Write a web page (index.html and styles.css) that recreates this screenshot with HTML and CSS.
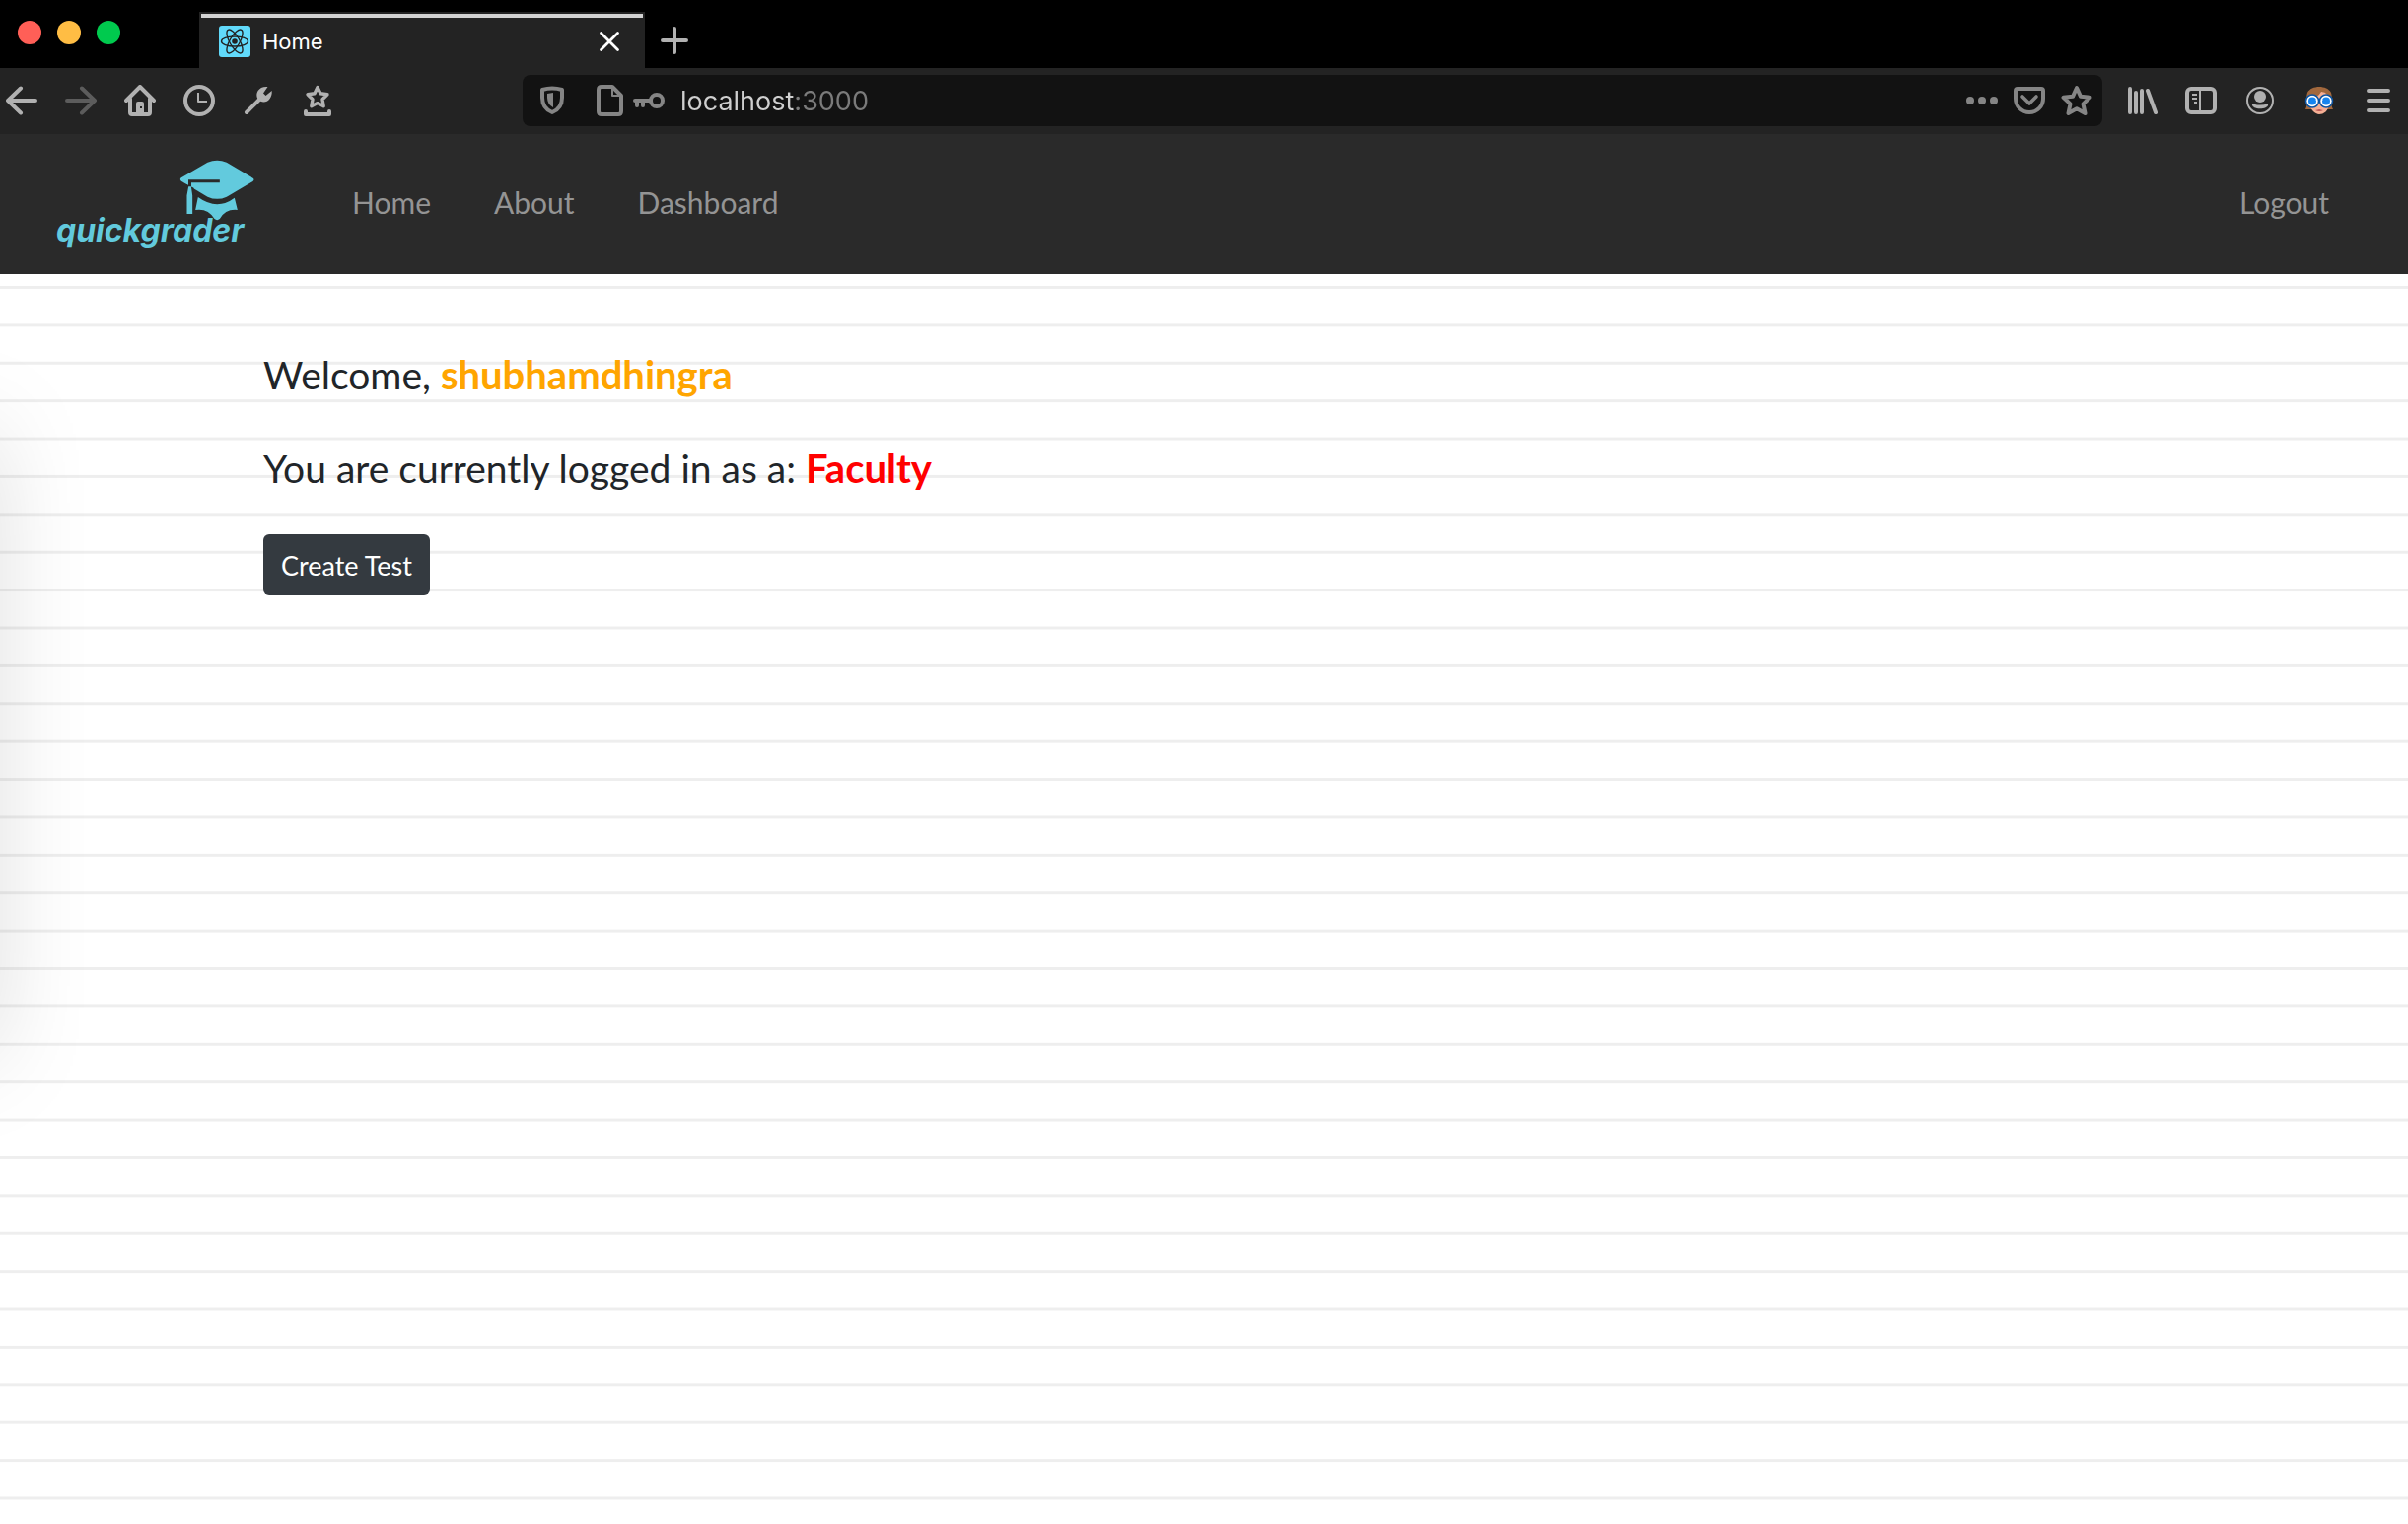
FILE: index.html
```html
<!DOCTYPE html>
<html lang="en">
<head>
<meta charset="utf-8">
<meta name="viewport" content="width=device-width, initial-scale=1">
<title>Home</title>
<link rel="stylesheet" href="styles.css">
</head>
<body>
<div class="tabs">
  <div class="lights">
    <button class="light red" aria-label="Close window"></button>
    <button class="light yellow" aria-label="Minimize window"></button>
    <button class="light green" aria-label="Zoom window"></button>
  </div>
  <div class="tab">
    <svg class="icon" viewBox="0 0 32 32"><rect width="32" height="32" rx="3" fill="#61dafb"/><g fill="none" stroke="#222" stroke-width="1.4"><ellipse cx="16" cy="16" rx="13.5" ry="5"/><ellipse cx="16" cy="16" rx="13.5" ry="5" transform="rotate(60 16 16)"/><ellipse cx="16" cy="16" rx="13.5" ry="5" transform="rotate(120 16 16)"/></g><circle cx="16" cy="16" r="2.8" fill="#222"/></svg>
    <span class="tab-title">Home</span>
    <button class="icon-button" aria-label="Close tab"><svg class="icon" viewBox="0 0 32 32"><path d="M7.500 7.500l17 17m0-17l-17 17" stroke="#fff" stroke-width="2.800" stroke-linecap="round"/></svg></button>
  </div>
  <button class="icon-button new-tab" aria-label="New tab"><svg class="icon" viewBox="0 0 32 32"><path d="M16 4v24M4 16h24" stroke="#b1b1b1" stroke-width="4" stroke-linecap="round"/></svg></button>
</div>

<div class="toolbar">
  <div class="tools">
    <button class="icon-button" aria-label="Back"><svg class="icon line" viewBox="0 0 32 32"><path d="M30 16H2M15 3.500L2 16l13 12.500"/></svg></button>
    <button class="icon-button faded" aria-label="Forward"><svg class="icon line" viewBox="0 0 32 32"><path d="M2 16h28M17 3.500L30 16 17 28.500"/></svg></button>
    <button class="icon-button" aria-label="Home page"><svg class="icon line" viewBox="0 0 32 32"><path d="M2 16L16 2l14 14M6 14v14q0 2 2 2h16q2 0 2-2V14"/><path d="M12 29V19q0-2 2-2h4q2 0 2 2v10z" fill="#b1b1b1" stroke="none"/><path d="M16 22h2v2h-2z" fill="#232323" stroke="none"/></svg></button>
    <button class="icon-button" aria-label="History"><svg class="icon line" viewBox="0 0 32 32"><circle cx="16" cy="16" r="14"/><path d="M15 8v9h9" stroke-width="2" stroke-linecap="butt"/></svg></button>
    <button class="icon-button" aria-label="Developer tools"><svg class="icon line" viewBox="0 0 32 32"><path d="M4 28L18 14"/><path d="M25.500 2C17 1 12 8 15.500 14.500c6 7 15 1 14.200-8.500L23.500 11 21 8.500z" fill="#b1b1b1" stroke="none"/></svg></button>
    <button class="icon-button" aria-label="Bookmarks menu"><svg class="icon line" viewBox="0 0 32 32"><path d="M16 2.500l3 6.300 7 1-5 5 1.200 7L16 18.600 9.800 21.800l1.200-7-5-5 7-1z" stroke-width="3.400"/><path d="M4 27v3h24v-3"/></svg></button>
  </div>
  <div class="address">
    <svg class="icon line shield" viewBox="0 0 32 32"><path d="M6 5q10-3 20 0v8q0 11-10 15Q6 24 6 13z" stroke-width="4"/><path d="M11 9l6-1v15q-6-3-6-10z" fill="currentColor" stroke="none"/></svg>
    <svg class="icon line page" viewBox="0 0 32 32"><path d="M8 2h11l9 9v16q0 3-3 3H8q-3 0-3-3V5q0-3 3-3z"/><path d="M19 2v9h9" stroke-width="2"/></svg>
    <svg class="icon line" viewBox="0 0 32 32"><circle cx="24" cy="16" r="6"/><path d="M2 16h16M4 16v5M10 16v5"/></svg>
    <input class="url" type="text" aria-label="Address" value="localhost:3000">
    <button class="icon-button" aria-label="Page actions"><svg class="icon" viewBox="0 0 32 32" fill="currentColor"><circle cx="4" cy="16" r="4"/><circle cx="16" cy="16" r="4"/><circle cx="28" cy="16" r="4"/></svg></button>
    <button class="icon-button" aria-label="Save to Pocket"><svg class="icon line" viewBox="0 0 32 32"><path d="M4 4h24q2 0 2 2v8a14 14 0 0 1-28 0V6q0-2 2-2z"/><path d="M9 12l7 7 7-7" stroke-width="3.600"/></svg></button>
    <button class="icon-button" aria-label="Bookmark this page"><svg class="icon line" viewBox="0 0 32 32"><path d="M16 3l4 8.800 9.500 1-7 6.600 2 9.600-8.500-4.800L7.500 29l2-9.600-7-6.600 9.500-1z"/></svg></button>
  </div>
  <div class="tools">
    <button class="icon-button" aria-label="Library"><svg class="icon line" viewBox="0 0 32 32"><path d="M4 4v24M10 8v20M16 6v22M22 6l8 22"/></svg></button>
    <button class="icon-button" aria-label="Sidebars"><svg class="icon line" viewBox="0 0 32 32"><rect x="2" y="4" width="28" height="24" rx="4"/><path d="M15 4v24M7 10h5M7 14h5M9 18h3" stroke-width="2" stroke-linecap="butt"/></svg></button>
    <button class="icon-button" aria-label="Account"><svg class="icon line" viewBox="0 0 32 32"><circle cx="16" cy="16" r="13" stroke-width="2"/><circle cx="16" cy="12" r="6" fill="#b1b1b1" stroke="none"/><path d="M8 19q8 3 16 0c2 7-18 7-16 0z" fill="#b1b1b1" stroke="none"/></svg></button>
    <button class="icon-button" aria-label="Profile"><svg class="icon" viewBox="0 0 32 32"><path d="M2 25C5 20 2 14 4 8c4-8 20-8 24 0 2 6-1 12 2 17z" fill="#a2683d"/><path d="M7 13Q15 13 18 7q8 0 8 11c0 9-6 12-10 12S6 25 6 17z" fill="#f5af94"/><path d="M12 26q4 2 8 0l-4-1z" fill="#b55"/><g fill="#1684ef" stroke="#fff" stroke-width="2"><circle cx="9" cy="16.500" r="5"/><circle cx="23" cy="16.500" r="5"/></g><path d="M13 16q3-2 6 0" stroke="#fff" stroke-width="2" fill="none"/><g fill="none" stroke="#0b55a5" stroke-width="1.500"><circle cx="9" cy="16.500" r="6.500"/><circle cx="23" cy="16.500" r="6.500"/></g></svg></button>
    <button class="icon-button" aria-label="Menu"><svg class="icon line" viewBox="0 0 32 32"><path d="M6 6h20M6 16h20M6 26h20"/></svg></button>
  </div>
</div>

<header class="navbar">
  <a class="logo" href="#">
    <svg class="cap" viewBox="460 66 230 186" fill="#62cadd"><path d="M465 121L545 74Q574 62 603 74l80 48q6 5 0 10l-80 47q-29 13-58 0l-80-48q-6-5 0-10z"/><path d="M582 131H491v18" fill="none" stroke="#2a2a2a" stroke-width="9"/><path d="M479 140v20h24v-8z" fill="#2a2a2a"/><path d="M487 148h8l4 27v56h-17v-56zM516 180q58 42 111 2l9 37q-36-4-54 27-8 7-16 0-20-33-58-27z"/></svg>
    <span class="wordmark">quickgrader</span>
  </a>
  <nav class="links">
    <a href="#">Home</a>
    <a href="#">About</a>
    <a href="#">Dashboard</a>
  </nav>
  <a class="logout" href="#">Logout</a>
</header>

<main class="paper">
  <p class="line-text">Welcome, <strong class="user">shubhamdhingra</strong></p>
  <p class="line-text">You are currently logged in as a: <strong class="role">Faculty</strong></p>
  <button class="create">Create Test</button>
</main>
</body>
</html>
```
FILE: styles.css
```css
* { box-sizing: border-box; }

body {
  margin: 0;
  min-height: 100vh;
  display: flex;
  flex-direction: column;
  background: #fff;
  font-family: Lato, "Open Sans", sans-serif;
  color: #212529;
}

button { padding: 0; border: 0; background: none; color: inherit; font: inherit; }
a { color: inherit; text-decoration: none; }

.icon { display: block; width: 32px; height: 32px; flex: none; }
.line { fill: none; stroke: currentColor; stroke-width: 4; stroke-linecap: round; stroke-linejoin: round; }
.icon-button { flex: none; }

/* Window tabs */
.tabs { display: flex; height: 69px; background: #000; font-family: Inter, sans-serif; }
.lights { display: flex; gap: 16px; width: 202px; padding: 21px 18px; }
.light { width: 24px; height: 24px; border-radius: 50%; }
.red { background: #ff5f57; }
.yellow { background: #ffbd44; }
.green { background: #00ca4e; }
.tab {
  position: relative;
  display: flex;
  align-items: center;
  gap: 12px;
  width: 452px;
  margin-top: 12px;
  padding: 4px 20px 2px 20px;
  background: #232323;
}
.tab::before { content: ""; position: absolute; top: 2px; left: 2px; right: 2px; height: 4px; background: #d2d2d2; }
.tab-title { flex: 1; color: #fff; font-size: 22px; }
.new-tab { padding: 12px 14px 0; }

/* Toolbar */
.toolbar {
  display: flex;
  align-items: center;
  height: 67px;
  padding: 0 14px 2px 6px;
  background: #232323;
  color: #b1b1b1;
}
.tools { display: flex; gap: 28px; }
.faded { color: #5c5c5c; }
.address {
  flex: 1;
  display: flex;
  align-items: center;
  gap: 16px;
  height: 52px;
  margin: 0 24px 0 192px;
  padding: 0 10px 0 14px;
  border-radius: 8px;
  background: #121212;
  color: #858585;
}
.shield { margin-right: 10px; }
.page { margin-right: -8px; }
.url {
  flex: 1;
  min-width: 0;
  padding: 2px 0 0;
  border: 0;
  background: linear-gradient(90deg, #cfcfcf 115px, #7b7b7b 115px);
  background-clip: text;
  -webkit-background-clip: text;
  -webkit-text-fill-color: transparent;
  color: #cfcfcf;
  font: 27px/36px Inter, sans-serif;
}

/* Site header */
.navbar {
  display: flex;
  align-items: center;
  padding: 26px 80px 26px 57px;
  background: #2a2a2a;
  color: #949494;
  font-size: 30px;
}
.logo { display: flex; flex-direction: column; align-items: flex-end; width: 202px; color: #62cadd; }
.cap { width: 77px; height: 62px; }
.wordmark { align-self: flex-start; margin: -6px 0 2px; font: italic 700 32px/32px Inter, sans-serif; }
.links { display: flex; gap: 64px; margin-left: 98px; padding-bottom: 4px; }
.logout { margin-left: auto; padding-bottom: 4px; }

/* Ruled sheet: one line every 1.2em */
.paper {
  position: relative;
  flex: 1;
  overflow: hidden;
  padding: 78px 267px;
  font-size: 32px;
  background: linear-gradient(#eee .1em, transparent .1em) 0 12px / 100% 1.2em;
}
.paper::before {
  content: "";
  position: absolute;
  top: 162px;
  left: -60px;
  width: 40px;
  height: 630px;
  box-shadow: 0 0 100px rgba(0, 0, 0, .26);
}
.line-text { margin: 0 0 47px; font-size: 39px; line-height: 48px; }
.line-text strong { font-size: 40px; }
.line-text + .create { margin-top: -4px; }
.user { color: orange; }
.role { color: red; }
.create {
  display: block;
  height: 62px;
  padding: 0 18px;
  border-radius: 6px;
  background: #343a40;
  color: #fff;
  font-size: 27px;
}
```
